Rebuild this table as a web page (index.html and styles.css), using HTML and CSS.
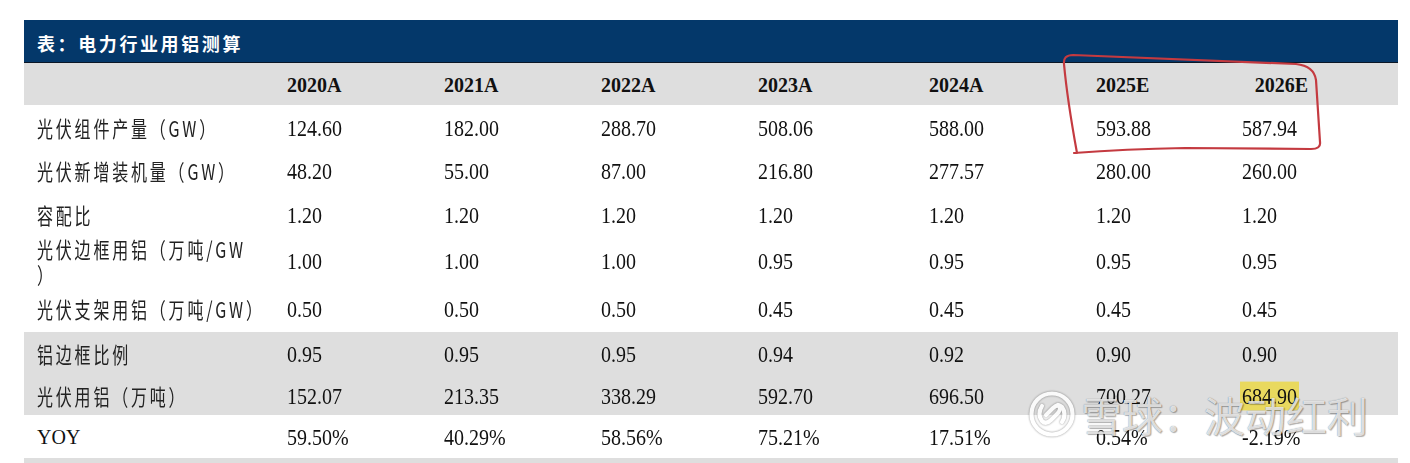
FILE: index.html
```html
<!DOCTYPE html>
<html lang="zh-CN">
<head>
<meta charset="utf-8">
<title>电力行业用铝测算</title>
<link rel="stylesheet" href="styles.css">
</head>
<body>
<div class="page">
  <div class="sheet">
    <div class="title-bar"><span class="title">表：电力行业用铝测算</span></div>
    <table class="data">
      <colgroup>
        <col class="c-label"><col class="c-a"><col class="c-a"><col class="c-a"><col class="c-b"><col class="c-c"><col class="c-d"><col class="c-e">
      </colgroup>
      <thead>
        <tr class="head">
          <th></th><th>2020A</th><th>2021A</th><th>2022A</th><th>2023A</th><th>2024A</th><th>2025E</th><th class="last">2026E</th>
        </tr>
      </thead>
      <tbody>
        <tr class="r1">
          <td><span class="lbl">光伏组件产量（GW）</span></td>
          <td><span class="num">124.60</span></td><td><span class="num">182.00</span></td><td><span class="num">288.70</span></td><td><span class="num">508.06</span></td><td><span class="num">588.00</span></td><td><span class="num">593.88</span></td><td><span class="num">587.94</span></td>
        </tr>
        <tr class="r2">
          <td><span class="lbl">光伏新增装机量（GW）</span></td>
          <td><span class="num">48.20</span></td><td><span class="num">55.00</span></td><td><span class="num">87.00</span></td><td><span class="num">216.80</span></td><td><span class="num">277.57</span></td><td><span class="num">280.00</span></td><td><span class="num">260.00</span></td>
        </tr>
        <tr class="r3">
          <td><span class="lbl">容配比</span></td>
          <td><span class="num">1.20</span></td><td><span class="num">1.20</span></td><td><span class="num">1.20</span></td><td><span class="num">1.20</span></td><td><span class="num">1.20</span></td><td><span class="num">1.20</span></td><td><span class="num">1.20</span></td>
        </tr>
        <tr class="r4">
          <td><span class="lbl two">光伏边框用铝（万吨/GW<br>）</span></td>
          <td><span class="num">1.00</span></td><td><span class="num">1.00</span></td><td><span class="num">1.00</span></td><td><span class="num">0.95</span></td><td><span class="num">0.95</span></td><td><span class="num">0.95</span></td><td><span class="num">0.95</span></td>
        </tr>
        <tr class="r5">
          <td><span class="lbl">光伏支架用铝（万吨/GW）</span></td>
          <td><span class="num">0.50</span></td><td><span class="num">0.50</span></td><td><span class="num">0.50</span></td><td><span class="num">0.45</span></td><td><span class="num">0.45</span></td><td><span class="num">0.45</span></td><td><span class="num">0.45</span></td>
        </tr>
        <tr class="r6 shade">
          <td><span class="lbl">铝边框比例</span></td>
          <td><span class="num">0.95</span></td><td><span class="num">0.95</span></td><td><span class="num">0.95</span></td><td><span class="num">0.94</span></td><td><span class="num">0.92</span></td><td><span class="num">0.90</span></td><td><span class="num">0.90</span></td>
        </tr>
        <tr class="r7 shade">
          <td><span class="lbl">光伏用铝（万吨）</span></td>
          <td><span class="num">152.07</span></td><td><span class="num">213.35</span></td><td><span class="num">338.29</span></td><td><span class="num">592.70</span></td><td><span class="num">696.50</span></td><td><span class="num">700.27</span></td><td><span class="num mark">684.90</span></td>
        </tr>
        <tr class="r8">
          <td><span class="num latin">YOY</span></td>
          <td><span class="num">59.50%</span></td><td><span class="num">40.29%</span></td><td><span class="num">58.56%</span></td><td><span class="num">75.21%</span></td><td><span class="num">17.51%</span></td><td><span class="num">0.54%</span></td><td><span class="num">-2.19%</span></td>
        </tr>
      </tbody>
    </table>
    <div class="foot-band"></div>
  </div>

  <svg class="annot" width="1410" height="463" viewBox="0 0 1410 463" aria-hidden="true">
    <path d="M1077 153 C1071 120 1066 86 1064 64 Q1063 55 1073 55 L1296 64 Q1314 66 1316 80 L1320 142 Q1321 149 1311 149 L1185 148 Q1125 149 1074 153" fill="none" stroke="#c43a40" stroke-width="2.2" stroke-linecap="round" stroke-linejoin="round"/>
  </svg>

  <div class="watermark">
    <svg class="wm-logo" width="48" height="48" viewBox="0 0 48 48" aria-hidden="true">
      <g fill="none" stroke="#ffffff" stroke-width="4.2" stroke-linecap="round" stroke-linejoin="round">
        <circle cx="24" cy="24" r="20.5"/>
        <path d="M14 16 Q9 24 14 31 Q18 35 23 30 L30 23 Q34 18 30 15"/>
        <path d="M34 32 Q39 24 34 17 Q30 13 25 18 L18 25"/>
      </g>
    </svg>
    <span class="wm-text">雪球：波动红利</span>
  </div>
</div>
</body>
</html>
```

FILE: styles.css
```css
html, body {
  margin: 0;
  padding: 0;
  background: #ffffff;
}

.page {
  position: relative;
  width: 1410px;
  height: 463px;
  overflow: hidden;
  padding: 20px 12px 0 24px;
  box-sizing: border-box;
  font-family: "Liberation Serif", "Times New Roman", serif;
  color: #111111;
}

.sheet {
  width: 1374px;
}

.title-bar {
  height: 43px;
  background: #04386a;
  border-bottom: 1px solid #0b1726;
  display: flex;
  align-items: center;
  padding-left: 13px;
  padding-top: 3px;
  box-sizing: border-box;
}

.title {
  font-family: "Noto Sans CJK SC", "Noto Sans", sans-serif;
  font-weight: 700;
  font-size: 18px;
  letter-spacing: 2.6px;
  color: #ffffff;
}

.data {
  width: 1374px;
  border-collapse: collapse;
  border-spacing: 0;
  table-layout: fixed;
}

.c-label { width: 263px; }
.c-a { width: 157px; }
.c-b { width: 171px; }
.c-c { width: 167px; }
.c-d { width: 146px; }
.c-e { width: 156px; }

.data th,
.data td {
  padding: 0;
  text-align: left;
  vertical-align: middle;
  white-space: nowrap;
}

.data td:first-child {
  padding-left: 13px;
}

.head {
  background: #dedede;
  height: 42px;
}

.head th {
  font-family: "Liberation Serif", "Times New Roman", serif;
  font-weight: 700;
  font-size: 20px;
  padding-top: 2px;
}

.head th.last {
  text-align: right;
  padding-right: 90px;
}

.r1 { height: 45px; }
.r2 { height: 42px; }
.r3 { height: 45px; }
.r4 { height: 48px; }
.r5 { height: 47px; }
.r6 { height: 44px; }
.r7 { height: 39px; }
.r8 { height: 43px; }

.shade {
  background: #dedede;
}

.num {
  display: inline-block;
  font-family: "Liberation Serif", "Times New Roman", serif;
  font-size: 20px;
  line-height: 24px;
  transform: scaleY(1.2);
  transform-origin: center;
}

.latin {
  transform: none;
}

.mark {
  background: #e9d95e;
  padding: 0 2px;
  margin-left: -2px;
}

.lbl {
  display: inline-block;
  font-family: "Noto Sans CJK SC", "Noto Sans", sans-serif;
  font-size: 20px;
  line-height: 24px;
  letter-spacing: 3.5px;
  color: #222222;
  transform: scale(0.8, 1.1);
  transform-origin: left center;
}

.lbl.two {
  line-height: 23px;
}

.foot-band {
  height: 10px;
  background: #dedede;
}

.annot {
  position: absolute;
  left: 0;
  top: 0;
  pointer-events: none;
}

.watermark {
  position: absolute;
  left: 1028px;
  top: 390px;
  display: flex;
  align-items: center;
  gap: 5px;
  pointer-events: none;
}

.wm-logo {
  opacity: 0.85;
  filter: drop-shadow(0 0 1px rgba(0, 0, 0, 0.5));
}

.wm-text {
  font-family: "Noto Sans CJK SC", "Noto Sans", sans-serif;
  font-weight: 400;
  font-size: 41px;
  line-height: 48px;
  color: rgba(255, 255, 255, 0.78);
  text-shadow: 0 0 1px rgba(0, 0, 0, 0.5), 1px 1px 1px rgba(0, 0, 0, 0.28);
}
```
